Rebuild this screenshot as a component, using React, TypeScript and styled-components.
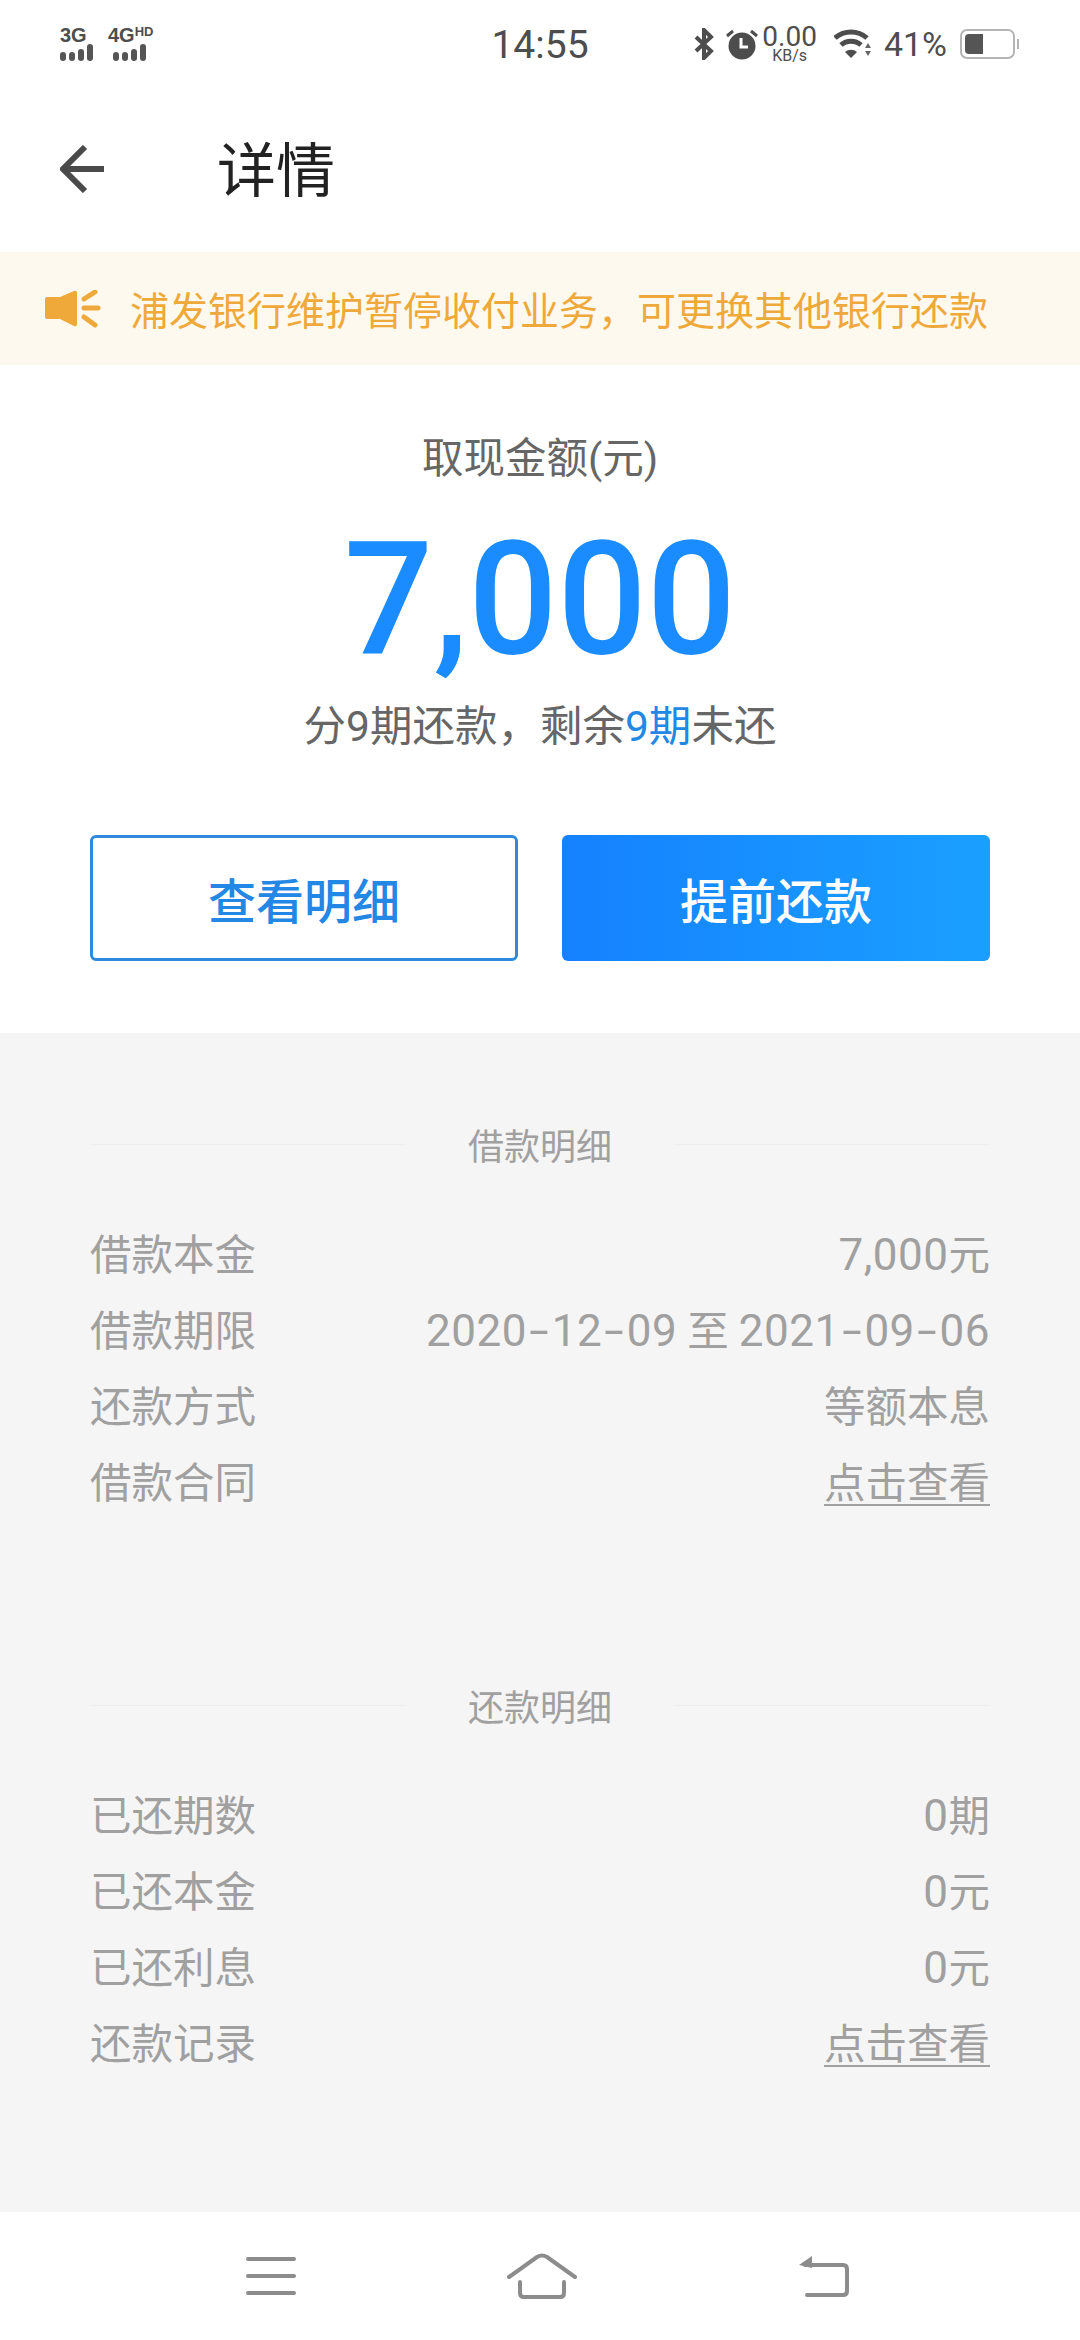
import type { ReactNode } from 'react';
import styled, { createGlobalStyle } from 'styled-components';

const GlobalStyle = createGlobalStyle`
  html, body { margin: 0; padding: 0; background: #fff; }
  * { box-sizing: border-box; }
  body { font-family: Roboto, "Noto Sans CJK SC", sans-serif; }
`;

const Page = styled.div`
  width: 1080px;
  height: 2340px;
  display: flex;
  flex-direction: column;
  overflow: hidden;
  background: #fff;
`;

const StatusBar = styled.div`
  height: 88px;
  display: grid;
  grid-template-columns: 1fr auto 1fr;
  align-items: center;
  padding: 0 60px;
  color: #4d4d4d;
`;
const Signals = styled.div`
  display: flex;
  gap: 15px;
`;
const Signal = styled.div`
  display: flex;
  flex-direction: column;
`;
const SignalName = styled.div`
  height: 17px;
  font: 700 20px/17px "Liberation Sans", sans-serif;
  white-space: nowrap;
  sup {
    font-size: 13px;
    line-height: 10px;
    vertical-align: top;
  }
`;
const Bars = styled.div<{ $inset: number }>`
  display: flex;
  align-items: flex-end;
  gap: 3px;
  margin-left: ${({ $inset }) => $inset}px;
  height: 17px;
`;
const Bar = styled.i<{ $h: number }>`
  width: 6px;
  height: ${({ $h }) => $h}px;
  border-radius: 3px;
  background: #555;
`;
const Time = styled.div`
  font-size: 39px;
  line-height: 44px;
  padding-top: 2px;
`;
const StatusRight = styled.div`
  display: flex;
  align-items: center;
  justify-content: flex-end;
`;
const AlarmIcon = styled.svg`
  margin-left: 12px;
`;
const Speed = styled.div`
  display: flex;
  flex-direction: column;
  align-items: center;
  margin: 0 17px 0 4px;
  font-size: 28px;
  line-height: 24px;
  span {
    font-size: 16px;
    line-height: 14px;
  }
`;
const Percent = styled.div`
  font-size: 34px;
  margin: 0 13px 0 12px;
`;

const Header = styled.div`
  height: 164px;
  display: flex;
  align-items: center;
  padding: 0 0 3px 60px;
`;
const Title = styled.h1`
  margin: 0 0 5px 113px;
  font: 400 59px/1 "Noto Sans CJK SC", sans-serif;
  color: #222;
`;

const Notice = styled.div`
  height: 113px;
  display: flex;
  align-items: center;
  gap: 29px;
  padding-left: 45px;
  background: #fdf9ef;
  color: #efa93a;
  font: 400 39px/1 "Noto Sans CJK SC", sans-serif;
`;

const Hero = styled.div`
  height: 668px;
  display: flex;
  flex-direction: column;
  align-items: center;
  padding-top: 66px;
`;
const HeroLabel = styled.div`
  font-size: 41.5px;
  line-height: 56px;
  color: #666;
`;
const Amount = styled.div`
  margin-top: 32px;
  font-size: 157px;
  font-weight: 500;
  line-height: 160px;
  color: #1a8cff;
`;
const Terms = styled.div`
  margin-top: 18px;
  font-size: 42.5px;
  line-height: 60px;
  color: #666;
  em {
    font-style: normal;
    color: #2387e6;
  }
`;
const Actions = styled.div`
  width: 900px;
  margin-top: 78px;
  display: grid;
  grid-template-columns: 428px 428px;
  justify-content: space-between;
`;
const ActionButton = styled.button<{ $primary?: boolean }>`
  height: 126px;
  border-radius: 6px;
  font: 500 48px/1 "Noto Sans CJK SC", sans-serif;
  border: ${({ $primary }) => ($primary ? 'none' : '3px solid #2f8ade')};
  background: ${({ $primary }) =>
    $primary ? 'linear-gradient(90deg, #1581ff, #1aa0ff)' : '#fff'};
  color: ${({ $primary }) => ($primary ? '#fff' : '#2387e6')};
`;

const Details = styled.div`
  flex: 1;
  display: flex;
  flex-direction: column;
  gap: 167px;
  padding: 91px 90px 0;
  background: #f5f5f5;
`;
const SectionHead = styled.div`
  display: flex;
  align-items: center;
  gap: 62px;
  height: 40px;
  margin-bottom: 50px;
  font: 400 36px/40px "Noto Sans CJK SC", sans-serif;
  color: #a0a0a0;
  &::before,
  &::after {
    content: '';
    flex: 1;
    height: 1px;
    background: #eeeeee;
  }
`;
const Row = styled.div`
  display: flex;
  justify-content: space-between;
  align-items: center;
  height: 76px;
  font-size: 41.5px;
  color: #a0a0a0;
`;
const Num = styled.span`
  font-size: 44px;
  letter-spacing: 0.5px;
`;
const Dash = styled.span`
  display: inline-block;
  margin: 0 6px;
  transform: scaleX(1.6);
`;
const Between = styled.span`
  margin: 0 10px;
`;
const LinkText = styled.a`
  text-decoration: underline;
  text-underline-offset: 6px;
  text-decoration-thickness: 2px;
`;

const NavBar = styled.div`
  height: 128px;
  display: flex;
  align-items: center;
  justify-content: space-between;
  padding: 0 231px 0 246px;
  color: #8c8c8c;
`;
const HomeIcon = styled.svg`
  margin-right: 10px;
`;

function DateText({ value }: { value: string }) {
  const parts = value.split('-');
  return (
    <Num>
      {parts.map((part, i) => (
        <span key={i}>
          {i > 0 && <Dash>-</Dash>}
          {part}
        </span>
      ))}
    </Num>
  );
}

const DETAILS: { title: string; rows: [string, ReactNode][] }[] = [
  {
    title: '借款明细',
    rows: [
      ['借款本金', <><Num>7,000</Num>元</>],
      [
        '借款期限',
        <>
          <DateText value="2020-12-09" />
          <Between>至</Between>
          <DateText value="2021-09-06" />
        </>,
      ],
      ['还款方式', '等额本息'],
      ['借款合同', <LinkText>点击查看</LinkText>],
    ],
  },
  {
    title: '还款明细',
    rows: [
      ['已还期数', <><Num>0</Num>期</>],
      ['已还本金', <><Num>0</Num>元</>],
      ['已还利息', <><Num>0</Num>元</>],
      ['还款记录', <LinkText>点击查看</LinkText>],
    ],
  },
];

const BAR_HEIGHTS = [9, 9, 12, 17];

function SignalBars({ inset }: { inset: number }) {
  return (
    <Bars $inset={inset}>
      {BAR_HEIGHTS.map((h, i) => (
        <Bar key={i} $h={h} />
      ))}
    </Bars>
  );
}

export default function App() {
  return (
    <Page>
      <GlobalStyle />
      <StatusBar>
        <Signals>
          <Signal>
            <SignalName>3G</SignalName>
            <SignalBars inset={0} />
          </Signal>
          <Signal>
            <SignalName>
              4G<sup>HD</sup>
            </SignalName>
            <SignalBars inset={5} />
          </Signal>
        </Signals>
        <Time>14:55</Time>
        <StatusRight>
          <svg width="20" height="32" viewBox="0 0 20 32" fill="none" stroke="#4d4d4d" strokeWidth="4">
            <path d="M2 9l15 14-7 7V2l7 7L2 23" />
          </svg>
          <AlarmIcon width="32" height="32" viewBox="0 0 32 32">
            <circle cx="16" cy="18" r="13.5" fill="#4d4d4d" />
            <path d="M15 10v9h7" fill="none" stroke="#fff" strokeWidth="3" />
            <path d="M1 8l6-5M31 8l-6-5" stroke="#4d4d4d" strokeWidth="3" />
          </AlarmIcon>
          <Speed>
            0.00
            <span>KB/s</span>
          </Speed>
          <svg width="38" height="30" viewBox="0 0 38 30" fill="none">
            <path d="M1 9a24 24 0 0 1 32 0" stroke="#4d4d4d" strokeWidth="5" />
            <path d="M7 16a15 15 0 0 1 20 0" stroke="#4d4d4d" strokeWidth="5" />
            <path d="M11 23a9 9 0 0 1 12 0l-6 6z" fill="#4d4d4d" />
            <path d="M31 19l3-5 3 5zM31 22l3 5 3-5z" fill="#666" />
          </svg>
          <Percent>41%</Percent>
          <svg width="60" height="30" viewBox="0 0 60 30">
            <rect x="1" y="1" width="53" height="28" rx="6" fill="none" stroke="#b5b5b5" strokeWidth="2" />
            <path d="M5 9a4 4 0 0 1 4-4h14v20H9a4 4 0 0 1-4-4z" fill="#555" />
            <rect x="57" y="10" width="2" height="10" fill="#b5b5b5" />
          </svg>
        </StatusRight>
      </StatusBar>

      <Header>
        <svg width="44" height="48" viewBox="0 0 44 48" fill="none" stroke="#4a4a4a" strokeWidth="6">
          <path d="M25 2L3 24l22 22M3 24h41" />
        </svg>
        <Title>详情</Title>
      </Header>

      <Notice>
        <svg width="56" height="38" viewBox="0 0 56 38" fill="#efa93a">
          <path d="M2 7h13L29 1q3-1 3 2v31q0 3-3 2L15 29H2q-2 0-2-2V9q0-2 2-2z" />
          <path d="M39 9l11-7M39 18h14M39 27l11 8" fill="none" stroke="#efa93a" strokeWidth="5" strokeLinecap="round" />
        </svg>
        浦发银行维护暂停收付业务，可更换其他银行还款
      </Notice>

      <Hero>
        <HeroLabel>取现金额(元)</HeroLabel>
        <Amount>7,000</Amount>
        <Terms>
          分9期还款，剩余<em>9期</em>未还
        </Terms>
        <Actions>
          <ActionButton>查看明细</ActionButton>
          <ActionButton $primary>提前还款</ActionButton>
        </Actions>
      </Hero>

      <Details>
        {DETAILS.map((section) => (
          <div key={section.title}>
            <SectionHead>{section.title}</SectionHead>
            {section.rows.map(([label, value]) => (
              <Row key={label}>
                <span>{label}</span>
                <span>{value}</span>
              </Row>
            ))}
          </div>
        ))}
      </Details>

      <NavBar>
        <svg width="50" height="38" viewBox="0 0 50 38" stroke="currentColor" strokeWidth="4" strokeLinecap="round">
          <path d="M2 2h46M2 19h46M2 36h46" />
        </svg>
        <HomeIcon width="70" height="46" viewBox="0 0 70 46" fill="none" stroke="currentColor" strokeWidth="4" strokeLinecap="round">
          <path d="M2 24L30 4q5-3 10 0l28 20" />
          <path d="M13 29v11q0 4 4 4h36q4 0 4-4V29" />
        </HomeIcon>
        <svg width="52" height="42" viewBox="0 0 52 42" fill="none" stroke="currentColor" strokeWidth="4" strokeLinecap="round">
          <path d="M8 10h38q4 0 4 4v22q0 4-4 4H10" />
          <path d="M2 10L15 1v12z" fill="currentColor" stroke="none" />
        </svg>
      </NavBar>
    </Page>
  );
}
